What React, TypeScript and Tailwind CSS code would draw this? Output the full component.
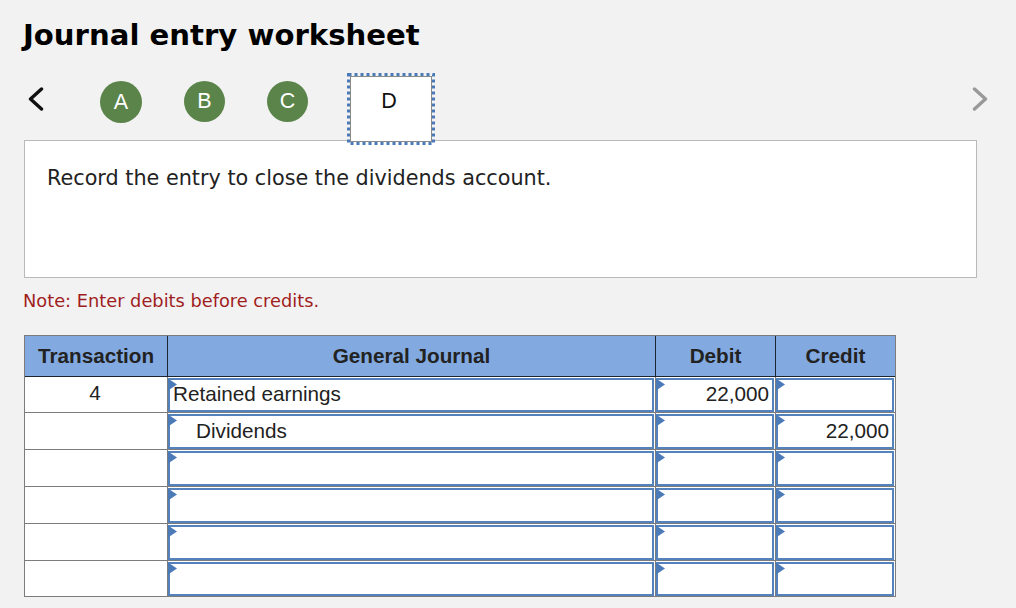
const rows: [string, string, boolean, string, string][] = [
  ["4", "Retained earnings", false, "22,000", ""],
  ["", "Dividends", true, "", "22,000"],
  ["", "", false, "", ""],
  ["", "", false, "", ""],
  ["", "", false, "", ""],
  ["", "", false, "", ""],
];

function Field({ text, right, indent, last, first }: { text: string; right?: boolean; indent?: boolean; last?: boolean; first?: boolean }) {
  return (
    <div className={`relative h-full pr-px pt-px ${last ? "" : "border-r border-[#7c7c7c]"}`}>
      <div
        className={`h-full border-[2px] border-[#5482bd] bg-white flex items-center text-[20.7px] leading-none text-[#222] pr-[3px] ${first ? "pb-[2px]" : ""} ${
          right ? "justify-end" : indent ? "pl-[26px]" : "pl-[3px]"
        }`}
      >
        {text}
      </div>
      <svg className="absolute left-0 top-[1px]" width="9" height="13" viewBox="0 0 9 13">
        <path d="M0 0.5 L9 6.5 L0 12.5 Z" fill="#4a7ab8" />
      </svg>
    </div>
  );
}

const cols = "grid grid-cols-[143px_488px_120px_119px]";
const circle = "rounded-full bg-[#5a8449] text-white text-[21.5px] flex items-center justify-center mt-[8px]";

export default function App() {
  return (
    <div className="w-[1016px] h-[608px] overflow-hidden bg-[#f2f2f2] pl-6 font-['Liberation_Sans',Arial,sans-serif]">
      <h1 className="font-['DejaVu_Sans',sans-serif] font-bold text-[29.15px] leading-none text-black pt-[21px] -ml-px h-[73px]">
        Journal entry worksheet
      </h1>
      <div className="relative z-10 flex items-start w-[964px] h-[72px] -mb-[5px]">
        <svg className="ml-[4px] mt-[14px]" width="16" height="24" viewBox="0 0 16 24">
          <path d="M13.5 2 L2.5 12 L13.5 22" fill="none" stroke="#111" strokeWidth="3.4" strokeLinecap="round" strokeLinejoin="round" />
        </svg>
        <div className={`ml-[56px] w-[42px] h-[42px] ${circle}`}>A</div>
        <div className={`ml-[42px] w-[41px] h-[41px] ${circle}`}>B</div>
        <div className={`ml-[42px] w-[41px] h-[41px] ${circle}`}>C</div>
        <div className="relative ml-[39px] w-[88px] h-[72px] p-[3px]">
          <div className="h-full border border-[#8a8a8a] bg-white text-[21.5px] text-[#111] flex justify-center pt-[11px] pr-[4px] leading-[26px]">D</div>
          <svg className="absolute inset-0" width="88" height="72" viewBox="0 0 88 72">
            <rect x="1.5" y="1.5" width="85" height="69" fill="none" stroke="#4a7ab8" strokeWidth="3" strokeDasharray="3 3" />
          </svg>
        </div>
        <svg className="ml-auto mt-[14px]" width="16" height="24" viewBox="0 0 16 24">
          <path d="M2.5 2 L13.5 12 L2.5 22" fill="none" stroke="#999" strokeWidth="3.4" strokeLinecap="round" strokeLinejoin="round" />
        </svg>
      </div>
      <div className="w-[953px] h-[138px] border border-[#b9b9b9] bg-white pl-[22px] pt-[24px] font-['DejaVu_Sans',sans-serif] text-[20.75px] leading-[26px] text-[#222]">
        Record the entry to close the dividends account.
      </div>
      <p className="mt-[13px] h-[44px] -ml-px font-['DejaVu_Sans',sans-serif] text-[17.8px] leading-[20px] text-[#a11d1d]">
        Note: Enter debits before credits.
      </p>
      <div className="w-[872px] h-[262px] border border-[#7c7c7c] bg-white">
        <div className={`${cols} h-[41px] bg-[#82aae0] border-b border-[#1b2530] text-[20.7px] font-bold text-[#222]`}>
          <div className="flex items-center justify-center border-r border-[#1b2530]">Transaction</div>
          <div className="flex items-center justify-center border-r border-[#1b2530]">General Journal</div>
          <div className="flex items-center justify-center border-r border-[#1b2530]">Debit</div>
          <div className="flex items-center justify-center">Credit</div>
        </div>
        {rows.map((r, i) => (
          <div
            key={i}
            className={`${cols} ${i === 0 ? "h-[36px]" : i === 5 ? "h-[35px]" : "h-[37px]"} ${i < 5 ? "border-b border-[#7c7c7c]" : ""}`}
          >
            <div className="flex items-center justify-center text-[20.7px] leading-none text-[#222] border-r border-[#7c7c7c] pb-[2px] pr-[2px]">{r[0]}</div>
            <Field text={r[1]} indent={r[2]} first={i === 0} />
            <Field text={r[3]} right first={i === 0} />
            <Field text={r[4]} right last first={i === 0} />
          </div>
        ))}
      </div>
    </div>
  );
}
